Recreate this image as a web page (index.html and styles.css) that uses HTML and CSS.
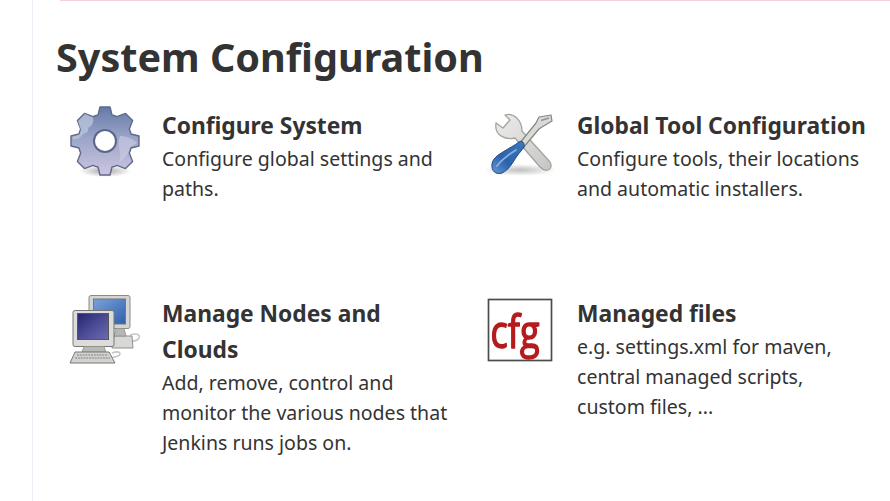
FILE: index.html
```html
<!DOCTYPE html>
<html lang="en">
<head>
<meta charset="utf-8">
<title>System Configuration</title>
<link rel="stylesheet" href="styles.css">
</head>
<body>
<main class="content">
  <div class="notice-edge"></div>
  <h2 class="section-title">System Configuration</h2>
  <div class="tiles">
    <a class="tile">
      <svg class="tile-icon" viewBox="-37 -36 72 72" aria-hidden="true">
        <defs>
          <linearGradient id="gearFill" x1="0" y1="0" x2="0" y2="1">
            <stop offset="0" stop-color="#6579a8"/>
            <stop offset=".45" stop-color="#9aa5c8"/>
            <stop offset="1" stop-color="#cdc5e0"/>
          </linearGradient>
          <radialGradient id="gearShadow">
            <stop offset="0" stop-color="#000" stop-opacity=".35"/>
            <stop offset="1" stop-color="#000" stop-opacity="0"/>
          </radialGradient>
        </defs>
        <ellipse cx="0" cy="30" rx="26" ry="6" fill="url(#gearShadow)"/>
        <path class="gear-body" d="M-5 -34L5 -34L7 -26A27 27 0 0 1 12 -24.3L20.5 -27.6L27.6 -20.5L24.3 -12A27 27 0 0 1 26 -7L34 -5L34 5L26 7A27 27 0 0 1 24.3 12L27.6 20.5L20.5 27.6L12 24.3A27 27 0 0 1 7 26L5 34L-5 34L-7 26A27 27 0 0 1 -12 24.3L-20.5 27.6L-27.6 20.5L-24.3 12A27 27 0 0 1 -26 7L-34 5L-34 -5L-26 -7A27 27 0 0 1 -24.3 -12L-27.6 -20.5L-20.5 -27.6L-12 -24.3A27 27 0 0 1 -7 -26Z"/>
        <path d="M-32 -2L-33 -4L-25.500 -6.500L-24 -11L-27 -20L-20 -27L-12 -23.500C-11 -18 -13 -15 -17 -13C-16 -9 -19 -8 -22 -7C-24 -3 -28 -1 -32 -2Z" fill="#b9c3da" opacity=".8"/>
        <path d="M15 -5C21 -5 27 -3 32 2L25 6C24 12 21 17 14 21C18 13 11 5 15 -5Z" fill="#cfcfe6" opacity=".55"/>
        <circle r="12" fill="#5b6688"/>
        <circle r="10" fill="#fff"/>
      </svg>
      <div class="tile-text">
        <h3 class="tile-title">Configure System</h3>
        <p class="tile-desc">Configure global settings and paths.</p>
      </div>
    </a>
    <a class="tile">
      <svg class="tile-icon" viewBox="5 5 72 72" aria-hidden="true">
        <defs>
          <linearGradient id="steel" x1="0" y1="0" x2="1" y2="1">
            <stop offset="0" stop-color="#eeeeec"/>
            <stop offset="1" stop-color="#c4c6c2"/>
          </linearGradient>
          <linearGradient id="grip" x1="1" y1="0" x2="0" y2="1">
            <stop offset="0" stop-color="#3f78bd"/>
            <stop offset=".6" stop-color="#2a62ad"/>
            <stop offset="1" stop-color="#6a9ad3"/>
          </linearGradient>
          <radialGradient id="toolShadow">
            <stop offset="0" stop-color="#000" stop-opacity=".25"/>
            <stop offset="1" stop-color="#000" stop-opacity="0"/>
          </radialGradient>
        </defs>
        <ellipse cx="42" cy="70" rx="36" ry="6" fill="url(#toolShadow)"/>
        <path d="M18 23L25 28L32 20L27 15C35 12 44 20 44 31L72 62C74 66 73 69 70 70C67 71 65 70 62 67L37 38C28 40 16 36 18 23Z" fill="url(#steel)" stroke="#a2a49f" stroke-width="1.3" stroke-linejoin="round"/>
        <path d="M58 23L61 17L73 15L74 21L64 27L61 29L45 48L41 44Z" fill="#d8dad6" stroke="#858783" stroke-width="1.2" stroke-linejoin="round"/>
        <path d="M63 20.500L71 18" stroke="#8b94a0" stroke-width="1.400"/>
        <path d="M41 42C44 40 47 43 46 47C44 50 42 52 39 56C35 62 31 70 24 73C18 75 13 71 14 64C15 58 20 55 25 52C31 48 36 46 41 42Z" fill="url(#grip)" stroke="#1d4683" stroke-width="1"/>
        <path d="M19 66C23 60 30 55 38 50" stroke="#9fc0e6" stroke-width="1.8" fill="none" stroke-linecap="round" opacity=".8"/>
      </svg>
      <div class="tile-text">
        <h3 class="tile-title">Global Tool Configuration</h3>
        <p class="tile-desc">Configure tools, their locations and automatic installers.</p>
      </div>
    </a>
    <a class="tile">
      <svg class="tile-icon" viewBox="8 8 72 72" aria-hidden="true">
        <defs>
          <linearGradient id="blueScreen" x1="0" y1="0" x2="1" y2="1">
            <stop offset="0" stop-color="#7ba2d8"/>
            <stop offset="1" stop-color="#2f5fae"/>
          </linearGradient>
          <linearGradient id="navyScreen" x1="0" y1="0" x2="1" y2="1">
            <stop offset="0" stop-color="#26246e"/>
            <stop offset=".5" stop-color="#4b4a94"/>
            <stop offset="1" stop-color="#6d6db0"/>
          </linearGradient>
        </defs>
        <path d="M70 50C79 47 82 52 77 55C74 57 68 56 64 58" fill="none" stroke="#c5c7c3" stroke-width="1.6"/>
        <path d="M54 51L72 51L73 63L52 63Z" fill="#d8d9d6" stroke="#8f918d"/>
        <rect x="29" y="10.500" width="41" height="33" rx="2" fill="#d4d5d2" stroke="#8a8c88"/>
        <rect x="33.500" y="14" width="32" height="25" fill="url(#blueScreen)" stroke="#777"/>
        <path d="M56 43.500L64 43.500L66 51L54 51Z" fill="#b5b7b3" stroke="#8f918d" stroke-width=".8"/>
        <path d="M52 68C60 65 62 69 58 71C54 73 50 72 47 73" fill="none" stroke="#c5c7c3" stroke-width="1.6"/>
        <rect x="13" y="25.500" width="41" height="36" rx="2" fill="#dcddda" stroke="#74767a"/>
        <rect x="17.500" y="28.500" width="31" height="26" fill="url(#navyScreen)" stroke="#555"/>
        <path d="M24 61.500L44 61.500L46 67L22 67Z" fill="#b8bab6" stroke="#8f918d" stroke-width=".8"/>
        <path d="M15 67L49 67L55 78L10 78Z" fill="#d2d3d0" stroke="#777975"/>
        <path d="M17 70L48 70M15 73L50 73" stroke="#9c9e9a" stroke-width="1.4" stroke-dasharray="2 .8"/>
      </svg>
      <div class="tile-text">
        <h3 class="tile-title">Manage Nodes and Clouds</h3>
        <p class="tile-desc">Add, remove, control and monitor the various nodes that Jenkins runs jobs on.</p>
      </div>
    </a>
    <a class="tile">
      <svg class="tile-icon" viewBox="5 3 72 72" aria-hidden="true">
        <rect x="10.500" y="9.500" width="63" height="61" fill="#fff" stroke="#4c4c4c" stroke-width="1.700"/>
        <text class="cfg-mark" x="12.500" y="58" textLength="49" lengthAdjust="spacingAndGlyphs">cfg</text>
      </svg>
      <div class="tile-text">
        <h3 class="tile-title">Managed files</h3>
        <p class="tile-desc">e.g. settings.xml for maven, central managed scripts, custom files, ...</p>
      </div>
    </a>
  </div>
</main>
</body>
</html>
```

FILE: styles.css
```css
html, body {
  margin: 0;
  padding: 0;
  height: 100%;
  overflow: hidden;
  background: #fff;
}

body {
  font-family: "Noto Sans", "Open Sans", sans-serif;
  color: #333;
}

.content {
  box-sizing: border-box;
  margin-left: 32px;
  min-height: 100%;
  border-left: 1px solid #e9eff5;
  padding-left: 23px;
}

.notice-edge {
  height: 1px;
  margin-left: 4px;
  background: #f3cfd6;
}

.section-title {
  margin: 0 0 23px;
  padding-top: 31px;
  font-size: 39.6px;
  line-height: 50px;
  font-weight: 700;
}

.tiles {
  display: grid;
  grid-template-columns: 415px 415px;
  grid-auto-rows: 188px;
}

.tile {
  display: flex;
  align-items: flex-start;
  gap: 22px;
  padding-left: 12px;
}

.tile-icon {
  flex: none;
  width: 72px;
  height: 72px;
  filter: blur(.6px);
}

.gear-body {
  fill: url(#gearFill);
  stroke: #5f6a88;
  stroke-width: 1.4;
  stroke-linejoin: round;
}

.cfg-mark {
  font-family: "Open Sans", sans-serif;
  font-size: 46px;
  fill: #b51b1e;
  stroke: #b51b1e;
  stroke-width: 1.5;
  stroke-linejoin: round;
}

.tile-text {
  width: 296px;
  padding-top: 3px;
}

.tile-title {
  margin: 0;
  font-size: 22.8px;
  line-height: 36px;
  font-weight: 700;
}

.tile-desc {
  margin: 0;
  font-size: 19.55px;
  line-height: 30px;
}
```
